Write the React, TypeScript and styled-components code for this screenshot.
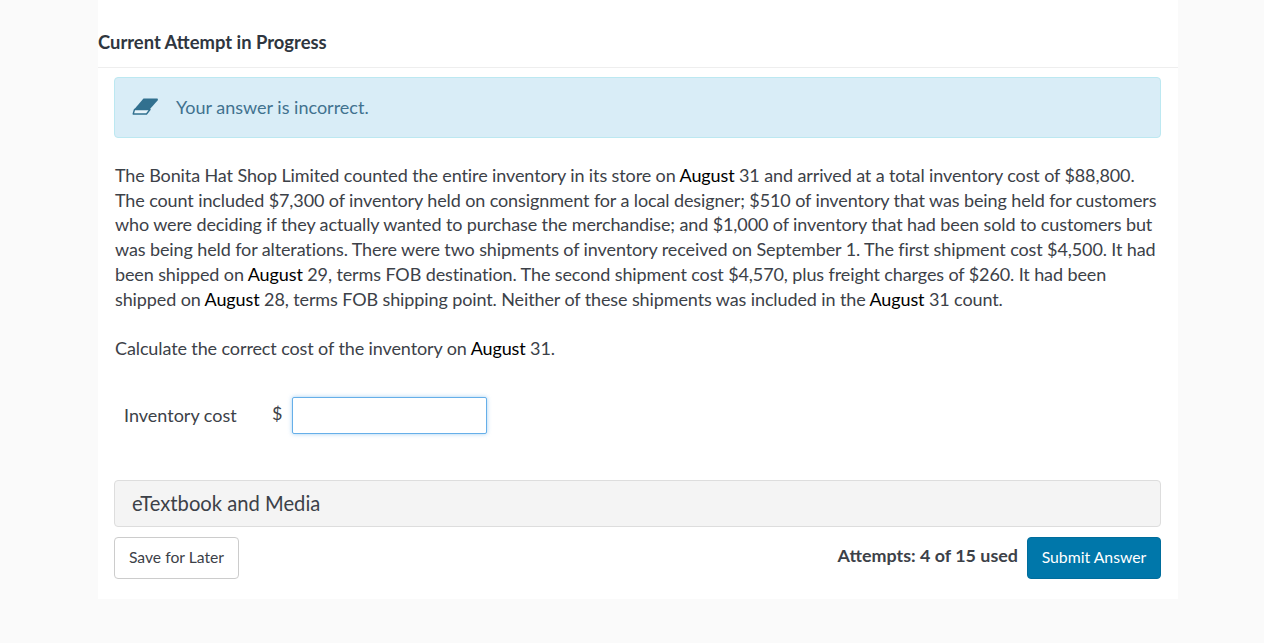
import React from "react";
import styled, { createGlobalStyle } from "styled-components";

const Global = createGlobalStyle`
  html, body { margin: 0; padding: 0; background: #fafafa; }
  body { font-family: Lato, "Liberation Sans", sans-serif; color: #333; }
`;
const Page = styled.div`
  width: 1080px;
  height: 599px;
  margin-left: 98px;
  background: #fff;
`;
const Header = styled.h2`
  margin: 0;
  height: 68px;
  box-sizing: border-box;
  padding-top: 31px;
  font-size: 18.4px;
  line-height: 22px;
  font-weight: 700;
  color: #2f3640;
  border-bottom: 1px solid #eee;
`;
const Body = styled.div`
  padding: 9px 17px 0 16px;
`;
const Alert = styled.div`
  height: 61px;
  box-sizing: border-box;
  display: flex;
  align-items: center;
  gap: 17px;
  padding-left: 17px;
  padding-bottom: 2px;
  background: #d9edf7;
  border: 1px solid #bce8f1;
  border-radius: 4px;
  color: #41728f;
  font-size: 18px;
`;
const Paragraph = styled.p`
  margin: 25px 0 0;
  padding-left: 1px;
  font-size: 18px;
  letter-spacing: -0.11px;
  line-height: 24.7px;
  white-space: nowrap;
  color: #3c4148;
  & b { font-weight: 400; color: #000; }
  & + & { margin-top: 25px; }
`;
const AnswerRow = styled.div`
  display: flex;
  align-items: center;
  margin: 36px 0 0 10px;
  height: 38px;
`;
const Label = styled.label`
  width: 148px;
  margin-top: -2px;
  font-size: 18px;
  color: #3c4148;
`;
const Dollar = styled.span`
  font-size: 18px;
  color: #3c4148;
  margin-top: -6px;
  width: 20px;
`;
const Input = styled.input`
  width: 195px;
  height: 37px;
  box-sizing: border-box;
  border: 1px solid #66afe9;
  border-radius: 2px;
  background: #fff;
  outline: none;
  box-shadow: 0 0 4px rgba(102, 175, 233, 0.6);
`;
const Media = styled.div`
  margin-top: 45px;
  height: 47px;
  box-sizing: border-box;
  display: flex;
  align-items: center;
  padding-left: 17px;
  padding-bottom: 1px;
  background: #f4f4f4;
  border: 1px solid #ddd;
  border-radius: 4px;
  font-size: 20.2px;
  color: #3c4148;
`;
const Footer = styled.div`
  display: flex;
  align-items: flex-start;
  margin-top: 10px;
`;
const Save = styled.button`
  width: 125px;
  height: 42px;
  background: #fff;
  border: 1px solid #ccc;
  border-radius: 4px;
  font: 400 15.7px Lato, sans-serif;
  color: #3c4148;
  padding: 0 0 2px;
`;
const Attempts = styled.span`
  margin-left: auto;
  margin-right: 9px;
  font-size: 17.9px;
  line-height: 36px;
  font-weight: 700;
  color: #3c4148;
`;
const Submit = styled.button`
  width: 134px;
  height: 42px;
  background: #0077aa;
  border: 1px solid #006d9c;
  border-radius: 4px;
  font: 400 15.8px Lato, sans-serif;
  color: #fff;
  padding: 0 0 2px;
`;
const Eraser = () => (
  <svg width="27" height="18" viewBox="0 0 27 18" aria-hidden="true">
    <path d="M11.5 .5H25.5L26 2L18 11H2.5Z" fill="#31708f" />
    <path d="M2.5 11.5H18L14.5 16H1.2Z" fill="#e8f4fa" stroke="#31708f" strokeWidth="1.4" strokeLinejoin="round" />
  </svg>
);

export default function App() {
  return (
    <Page>
      <Global />
      <Header>Current Attempt in Progress</Header>
      <Body>
        <Alert><Eraser />Your answer is incorrect.</Alert>
        <Paragraph>
          The Bonita Hat Shop Limited counted the entire inventory in its store on <b>August</b> 31 and arrived at a total inventory cost of $88,800.<br />
          The count included $7,300 of inventory held on consignment for a local designer; $510 of inventory that was being held for customers<br />
          who were deciding if they actually wanted to purchase the merchandise; and $1,000 of inventory that had been sold to customers but<br />
          was being held for alterations. There were two shipments of inventory received on September 1. The first shipment cost $4,500. It had<br />
          been shipped on <b>August</b> 29, terms FOB destination. The second shipment cost $4,570, plus freight charges of $260. It had been<br />
          shipped on <b>August</b> 28, terms FOB shipping point. Neither of these shipments was included in the <b>August</b> 31 count.
        </Paragraph>
        <Paragraph>Calculate the correct cost of the inventory on <b>August</b> 31.</Paragraph>
        <AnswerRow>
          <Label>Inventory cost</Label>
          <Dollar>$</Dollar>
          <Input type="text" />
        </AnswerRow>
        <Media>eTextbook and Media</Media>
        <Footer>
          <Save>Save for Later</Save>
          <Attempts>Attempts: 4 of 15 used</Attempts>
          <Submit>Submit Answer</Submit>
        </Footer>
      </Body>
    </Page>
  );
}
